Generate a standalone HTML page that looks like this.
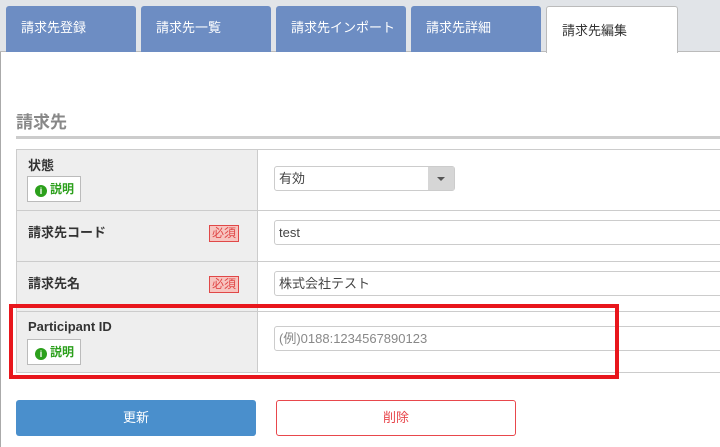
<!DOCTYPE html>
<html><head><meta charset="utf-8"><style>
*{box-sizing:border-box;margin:0;padding:0}
body{width:720px;height:447px;overflow:hidden;background:#fff;font-family:"Liberation Sans","Noto Sans CJK JP",sans-serif;position:relative}
.top{position:absolute;left:0;top:0;width:720px;height:52px;background:#e1e4e8;border-bottom:1px solid #bbb}
.tab{position:absolute;top:6px;height:46px;width:130px;background:#6d8dc3;border-radius:3px 3px 0 0;color:#fff;font-size:13px;line-height:16px;padding:14px 0 0 15px}
.tab.act{background:#fff;color:#333;border:1px solid #bbb;border-bottom:none;height:47px;padding-top:16px;width:132px}
.panel{position:absolute;left:0;top:52px;width:720px;height:395px;border-left:1px solid #aaa}
h2{position:absolute;left:16px;top:112px;font-size:17px;line-height:22px;color:#888;font-weight:bold}
.hl{position:absolute;left:16px;top:136px;width:704px;height:3px;background:#ccc}
.row{position:absolute;left:16px;width:704px;border-top:1px solid #ccc;border-left:1px solid #ccc}
.lab{position:absolute;left:0;top:0;bottom:0;width:241px;background:#eee;border-right:1px solid #ccc}
.lt{position:absolute;left:11px;font-size:13px;line-height:16px;font-weight:bold;color:#333}
.req{position:absolute;left:192px;font-size:12px;color:#e04848;background:#f7c5c0;border:1px solid #e04848;padding:0 2px;line-height:15px}
.exp{position:absolute;left:10px;width:54px;height:26px;background:#fff;border:1px solid #bbb;color:#2ca01c;font-size:12px;line-height:16px;font-weight:bold;padding:4px 0 0 7px}
.exp i{display:inline-block;width:12px;height:12px;border-radius:50%;background:#2ca01c;color:#fff;font-size:9px;font-style:normal;text-align:center;line-height:12px;margin-right:3px;vertical-align:-1px}
.inp{position:absolute;left:257px;height:25px;border:1px solid #ccc;border-radius:3px;font-size:13px;color:#444;padding-left:4px;line-height:23px;width:460px}
</style></head><body>
<div class="top">
<div class="tab" style="left:6px">請求先登録</div>
<div class="tab" style="left:141px">請求先一覧</div>
<div class="tab" style="left:276px">請求先インポート</div>
<div class="tab" style="left:411px">請求先詳細</div>
<div class="tab act" style="left:546px">請求先編集</div>
</div>
<div class="panel"></div>
<h2>請求先</h2>
<div class="hl"></div>
<div class="row" style="top:149px;height:61px"><div class="lab"><div class="lt" style="top:8px">状態</div><div class="exp" style="top:26px"><i>i</i>説明</div></div>
<div class="inp" style="top:16px;width:181px"><span>有効</span><div style="position:absolute;right:0;top:0;width:26px;height:23px;background:#d6d6d6"><div style="position:absolute;left:9px;top:10px;border:4px solid transparent;border-top:4px solid #555"></div></div></div></div>
<div class="row" style="top:210px;height:51px"><div class="lab"><div class="lt" style="top:14px">請求先コード</div><div class="req" style="top:14px">必須</div></div><div class="inp" style="top:9px">test</div></div>
<div class="row" style="top:261px;height:50px"><div class="lab"><div class="lt" style="top:14px">請求先名</div><div class="req" style="top:14px">必須</div></div><div class="inp" style="top:9px">株式会社テスト</div></div>
<div class="row" style="top:311px;height:62px;border-bottom:1px solid #ccc"><div class="lab"><div class="lt" style="top:7px">Participant ID</div><div class="exp" style="top:27px"><i>i</i>説明</div></div><div class="inp" style="top:14px;color:#888">(例)0188:1234567890123</div></div>
<div style="position:absolute;left:9px;top:304px;width:610px;height:75px;border:4px solid #e8161c"></div>
<div style="position:absolute;left:16px;top:400px;width:240px;height:36px;background:#4a8fcc;border-radius:3px;color:#fff;font-size:13px;text-align:center;line-height:35px">更新</div>
<div style="position:absolute;left:276px;top:400px;width:240px;height:36px;border:1px solid #e8474c;border-radius:3px;color:#e8474c;font-size:13px;text-align:center;line-height:33px">削除</div>
</body></html>
